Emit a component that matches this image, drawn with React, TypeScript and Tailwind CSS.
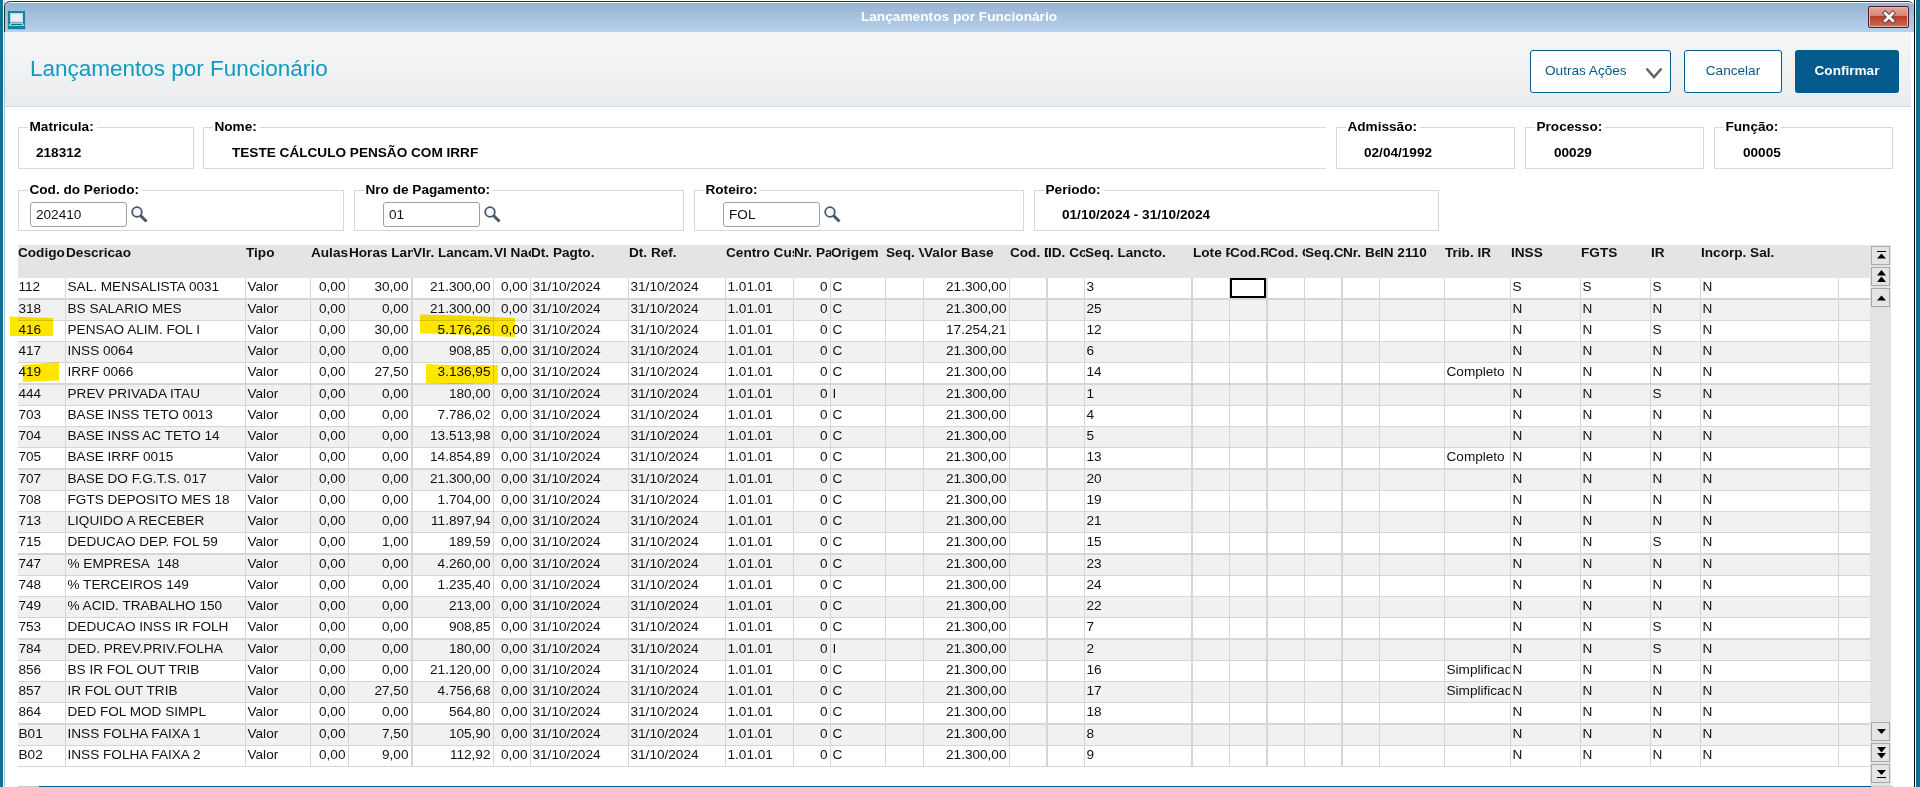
import { clsx } from "clsx";
import type { ReactNode } from "react";

type Column = {
  title: string;
  width: number;
  line?: number;
  align?: "right";
};

type Entry = {
  code: string;
  description: string;
  hours: string;
  amount: string;
  origin?: string;
  base?: string;
  seq: string;
  tribIr?: string;
  inss?: string;
  fgts?: string;
  ir?: string;
};

// width includes the separator on the right of the cell
const columns: Column[] = [
  { title: "Codigo", width: 48 },
  { title: "Descricao", width: 180 },
  { title: "Tipo", width: 65 },
  { title: "Aulas", width: 38, align: "right" },
  { title: "Horas Lancam.", width: 64, line: 2, align: "right" },
  { title: "Vlr. Lancam.", width: 81, align: "right" },
  { title: "Vl Nao Pago", width: 37, align: "right" },
  { title: "Dt. Pagto.", width: 98 },
  { title: "Dt. Ref.", width: 97 },
  { title: "Centro Custo", width: 68 },
  { title: "Nr. Parcelas", width: 37, align: "right" },
  { title: "Origem", width: 55 },
  { title: "Seq. Verba", width: 38 },
  { title: "Valor Base", width: 86, align: "right" },
  { title: "Cod. Depto", width: 38, line: 2 },
  { title: "ID. Conta", width: 37 },
  { title: "Seq. Lancto.", width: 108, line: 2 },
  { title: "Lote Pagto", width: 37 },
  { title: "Cod.RRA", width: 38, line: 2 },
  { title: "Cod. Conv", width: 37 },
  { title: "Seq.Cálc", width: 38, line: 2 },
  { title: "Nr. Benef", width: 37 },
  { title: "IN 2110", width: 65 },
  { title: "Trib. IR", width: 66 },
  { title: "INSS", width: 70 },
  { title: "FGTS", width: 70 },
  { title: "IR", width: 50 },
  { title: "Incorp. Sal.", width: 138 },
  { title: "", width: 31, line: 0 }
];

const entries: Entry[] = [
  { code: "112", description: "SAL. MENSALISTA 0031", hours: "30,00", amount: "21.300,00", seq: "3", inss: "S", fgts: "S", ir: "S" },
  { code: "318", description: "BS SALARIO MES", hours: "0,00", amount: "21.300,00", seq: "25" },
  { code: "416", description: "PENSAO ALIM. FOL I", hours: "30,00", amount: "5.176,26", base: "17.254,21", seq: "12", ir: "S" },
  { code: "417", description: "INSS 0064", hours: "0,00", amount: "908,85", seq: "6" },
  { code: "419", description: "IRRF 0066", hours: "27,50", amount: "3.136,95", seq: "14", tribIr: "Completo" },
  { code: "444", description: "PREV PRIVADA ITAU", hours: "0,00", amount: "180,00", origin: "I", seq: "1", ir: "S" },
  { code: "703", description: "BASE INSS TETO 0013", hours: "0,00", amount: "7.786,02", seq: "4" },
  { code: "704", description: "BASE INSS AC TETO 14", hours: "0,00", amount: "13.513,98", seq: "5" },
  { code: "705", description: "BASE IRRF 0015", hours: "0,00", amount: "14.854,89", seq: "13", tribIr: "Completo" },
  { code: "707", description: "BASE DO F.G.T.S. 017", hours: "0,00", amount: "21.300,00", seq: "20" },
  { code: "708", description: "FGTS DEPOSITO MES 18", hours: "0,00", amount: "1.704,00", seq: "19" },
  { code: "713", description: "LIQUIDO A RECEBER", hours: "0,00", amount: "11.897,94", seq: "21" },
  { code: "715", description: "DEDUCAO DEP. FOL 59", hours: "1,00", amount: "189,59", seq: "15", ir: "S" },
  { code: "747", description: "% EMPRESA  148", hours: "0,00", amount: "4.260,00", seq: "23" },
  { code: "748", description: "% TERCEIROS 149", hours: "0,00", amount: "1.235,40", seq: "24" },
  { code: "749", description: "% ACID. TRABALHO 150", hours: "0,00", amount: "213,00", seq: "22" },
  { code: "753", description: "DEDUCAO INSS IR FOLH", hours: "0,00", amount: "908,85", seq: "7", ir: "S" },
  { code: "784", description: "DED. PREV.PRIV.FOLHA", hours: "0,00", amount: "180,00", origin: "I", seq: "2", ir: "S" },
  { code: "856", description: "BS IR FOL OUT TRIB", hours: "0,00", amount: "21.120,00", seq: "16", tribIr: "Simplificado" },
  { code: "857", description: "IR FOL OUT TRIB", hours: "27,50", amount: "4.756,68", seq: "17", tribIr: "Simplificado" },
  { code: "864", description: "DED FOL MOD SIMPL", hours: "0,00", amount: "564,80", seq: "18" },
  { code: "B01", description: "INSS FOLHA FAIXA 1", hours: "7,50", amount: "105,90", seq: "8" },
  { code: "B02", description: "INSS FOLHA FAIXA 2", hours: "9,00", amount: "112,92", seq: "9" }
];

const FOCUSED_COLUMN = 18;

function toCells(entry: Entry) {
  return [
    entry.code,
    entry.description,
    "Valor",
    "0,00",
    entry.hours,
    entry.amount,
    "0,00",
    "31/10/2024",
    "31/10/2024",
    "1.01.01",
    "0",
    entry.origin ?? "C",
    "",
    entry.base ?? "21.300,00",
    "",
    "",
    entry.seq,
    "",
    "",
    "",
    "",
    "",
    "",
    entry.tribIr ?? "",
    entry.inss ?? "N",
    entry.fgts ?? "N",
    entry.ir ?? "N",
    "N",
    ""
  ];
}

function TitleBar() {
  return (
    <div className="flex h-[31px] items-start rounded-t-[6px] border-t border-[#2b3a35] bg-linear-to-b from-[#96b1cf] to-[#b8d2ec] pl-[2px] pr-[5px] shadow-[inset_0_1px_0_#eef5fb,-1px_0_0_#1f2a2a]">
      <svg className="mt-[8px] h-[20px] w-[19px] shrink-0" viewBox="0 0 19 20">
        <rect x="0.5" y="0.5" width="18" height="19" rx="1" fill="#1583a6" stroke="#8cc6dc" />
        <rect x="3.5" y="3.5" width="12" height="8.5" fill="#e9eef0" stroke="#c3d9e2" />
        <path d="M3 13h13l1.5 3h-16z" fill="#9fc9d8" />
        <path d="M4 14.5h11" stroke="#1b6e8c" />
      </svg>
      <h1 className="flex-1 pl-[24px] pt-[6px] text-center text-[13.700px] font-bold leading-[18px] text-white">
        Lançamentos por Funcionário
      </h1>
      <button className="mt-[4px] flex h-[22px] w-[41px] items-center justify-center rounded-[2px] border border-[#43202a] bg-[linear-gradient(#e6a698,#d68474_45%,#b93c26_46%,#cf6a50)] shadow-[inset_0_0_0_1px_#e9b3a8]">
        <svg className="h-[14px] w-[14px]" viewBox="0 0 14 14">
          <path d="M3.2 3.2l7.6 7.6M10.8 3.2l-7.6 7.6" stroke="#55404a" strokeWidth="4.6" strokeLinecap="square" />
          <path d="M3.2 3.2l7.6 7.6M10.8 3.2l-7.6 7.6" stroke="#f6f6f6" strokeWidth="2.8" strokeLinecap="square" />
        </svg>
      </button>
    </div>
  );
}

function PageHeader() {
  return (
    <div className="mr-[3px] flex h-[75px] items-start border-b border-[#d5d8da] bg-linear-to-b from-[#f5f7f6] to-[#ebecef] pl-[25px] pr-[12px]">
      <h2 className="flex-1 pt-[22px] text-[22.500px] leading-[30px] text-[#0f9bc1]">Lançamentos por Funcionário</h2>
      <div className="flex gap-[13px] pt-[18px]">
        <button className="flex h-[43px] w-[141px] items-center justify-between rounded-[3px] border border-[#045a8d] bg-white pl-[14px] pr-[7px] text-[#045a8d]">
          Outras Ações
          <svg className="mt-[3px] h-[12px] w-[18px]" viewBox="0 0 18 12">
            <path d="M1.5 1.5L9 10l7.500-8.500" fill="none" stroke="#666" strokeWidth="2.6" />
          </svg>
        </button>
        <button className="h-[43px] w-[98px] rounded-[3px] border border-[#045a8d] bg-white text-[#045a8d]">Cancelar</button>
        <button className="h-[43px] w-[104px] rounded-[3px] bg-[#045a8d] font-bold text-white">Confirmar</button>
      </div>
    </div>
  );
}

type FieldProps = {
  label: string;
  className: string;
  children: ReactNode;
};

function Field({ label, className, children }: FieldProps) {
  return (
    <div className={clsx("border border-[#d8d8d8]", className)}>
      <div className="-mt-[10px] ml-[9px] flex">
        <span className="bg-white pl-[1.500px] pr-[3px] font-bold leading-[18px] text-black">{label}</span>
      </div>
      {children}
    </div>
  );
}

function FieldValue({ className, children }: { className: string; children: ReactNode }) {
  return <p className={clsx("font-bold leading-[18px] text-black", className)}>{children}</p>;
}

function LookupInput({ value, className }: { value: string; className: string }) {
  return (
    <div className={clsx("mt-[3px] flex items-center gap-[4px]", className)}>
      <input
        readOnly
        value={value}
        className="h-[25px] w-[97px] rounded-[3px] border border-[#98a3a5] bg-white pl-[5px] text-[#111] outline-none"
      />
      <svg className="h-[17px] w-[17px]" viewBox="0 0 17 17">
        <circle cx="6" cy="6" r="4.8" fill="#f4f8fb" stroke="#4a5568" strokeWidth="1.8" />
        <path d="M9.500 9.500l6 6" stroke="#4a5568" strokeWidth="3" />
      </svg>
    </div>
  );
}

function Fields() {
  return (
    <div className="pl-[13px] pt-[20px]">
      <div className="flex gap-[10px]">
        <Field label="Matricula:" className="-mr-px h-[42px] w-[176px]">
          <FieldValue className="mt-[8px] pl-[17px]">218312</FieldValue>
        </Field>
        <Field label="Nome:" className="h-[42px] w-[1123px] border-r-0">
          <FieldValue className="mt-[8px] pl-[28px]">TESTE CÁLCULO PENSÃO COM IRRF</FieldValue>
        </Field>
        <Field label="Admissão:" className="h-[42px] w-[179px]">
          <FieldValue className="mt-[8px] pl-[27px]">02/04/1992</FieldValue>
        </Field>
        <Field label="Processo:" className="h-[42px] w-[179px]">
          <FieldValue className="mt-[8px] pl-[28px]">00029</FieldValue>
        </Field>
        <Field label="Função:" className="h-[42px] w-[179px]">
          <FieldValue className="mt-[8px] pl-[28px]">00005</FieldValue>
        </Field>
      </div>
      <div className="mt-[21px] flex gap-[10px]">
        <Field label="Cod. do Periodo:" className="h-[41px] w-[326px]">
          <LookupInput value="202410" className="pl-[11px]" />
        </Field>
        <Field label="Nro de Pagamento:" className="h-[41px] w-[330px]">
          <LookupInput value="01" className="pl-[28px]" />
        </Field>
        <Field label="Roteiro:" className="h-[41px] w-[330px]">
          <LookupInput value="FOL" className="pl-[28px]" />
        </Field>
        <Field label="Periodo:" className="h-[41px] w-[405px]">
          <FieldValue className="mt-[7px] pl-[27px]">01/10/2024 - 31/10/2024</FieldValue>
        </Field>
      </div>
    </div>
  );
}

function EntriesTable() {
  return (
    <div className="w-[1852px]">
      <div className="flex h-[33.450px] bg-[#e4e4e4] font-bold text-[#111]">
        {columns.map((column, i) => (
          <div key={i} className="shrink-0 overflow-hidden whitespace-nowrap leading-[15px]" style={{ width: column.width }}>
            {column.title}
          </div>
        ))}
      </div>
      {entries.map((entry, row) => (
        <div key={entry.code} className="flex h-[21.260px] bg-[#d6d6d6] pb-[1.260px]">
          {toCells(entry).map((value, i) => {
            const { width, line = 1, align } = columns[i];

            return (
              <div key={i} className="h-[20px] shrink-0" style={{ width, paddingRight: line }}>
                <div
                  className={clsx(
                    "h-full overflow-hidden whitespace-pre leading-[18.600px] text-[#111]",
                    row % 2 ? "bg-[#f1f1f1]" : "bg-white",
                    align === "right" ? "pr-[2.500px] text-right" : i === 0 ? "pl-[0.500px]" : "pl-[1.500px]",
                    row === 0 && i === FOCUSED_COLUMN && "border-2 border-black"
                  )}
                >
                  {value}
                </div>
              </div>
            );
          })}
        </div>
      ))}
    </div>
  );
}

function ScrollButton({ path }: { path: string }) {
  return (
    <button className="flex h-[19px] w-[19px] items-center justify-center border border-[#a9a9a9] bg-[#e4e4e4]">
      <svg className="ml-[2px] h-[13px] w-[11px] shrink-0" viewBox="0 0 11 13">
        <path d={path} fill="#000" />
      </svg>
    </button>
  );
}

function Scrollbar() {
  return (
    <div className="flex h-[541px] w-[21px] flex-col justify-between bg-[#e3e3e3] pb-[3px] pl-px pt-px">
      <div className="flex flex-col gap-[2px]">
        <ScrollButton path="M1 2h9v1h-9zM5.500 4.500L10 9.500H1z" />
        <ScrollButton path="M5.500 0L10 5.500H1zM5.500 6.500L10 12H1z" />
        <ScrollButton path="M5.500 4.500L10 9.500H1z" />
      </div>
      <div className="flex flex-col gap-[2px]">
        <ScrollButton path="M1 4h9l-4.500 5z" />
        <ScrollButton path="M1 1h9l-4.500 5.500zM1 7h9l-4.500 5.500z" />
        <ScrollButton path="M1 3h9l-4.500 5zM1 10h9v1h-9z" />
      </div>
    </div>
  );
}

// marker strokes over the rows under review
function Highlights() {
  return (
    <svg className="pointer-events-none absolute left-0 top-0 h-[787px] w-[600px] mix-blend-multiply" viewBox="0 0 600 787">
      <g fill="#ffe600">
        <path d="M10 316.500L53 318v18H10z" />
        <path d="M22.500 365L59 362v18.500L23 382z" />
        <path d="M420 314.500L460 315.500l55 2.500v19l-55-2.500-40-1z" />
        <path d="M426 364l22 1h50v18l-45 1-27-1z" />
      </g>
    </svg>
  );
}

export default function App() {
  return (
    <div className="relative flex h-[787px] w-[1920px] overflow-hidden bg-white font-['Liberation_Sans',Arial,sans-serif] text-[13.600px]">
      <div className="w-[3px] bg-[#0c7490]" />
      <div className="ml-px flex h-full w-[1910px] flex-col border-l border-[#a9c6e4] pt-px">
        <TitleBar />
        <PageHeader />
        <Fields />
        <div className="mt-[14px] flex pl-[13px]">
          <EntriesTable />
          <Scrollbar />
        </div>
        <div className="ml-[13px] flex h-px">
          <div className="w-[21px] bg-[#c9c9c9]" />
          <div className="w-[1832px] bg-[#045a8d]" />
          <div className="w-[22px] bg-[#c9c9c9]" />
        </div>
      </div>
      <div className="w-px bg-black" />
      <div className="ml-px w-[4px] bg-[#0c7490]" />
      <Highlights />
    </div>
  );
}
